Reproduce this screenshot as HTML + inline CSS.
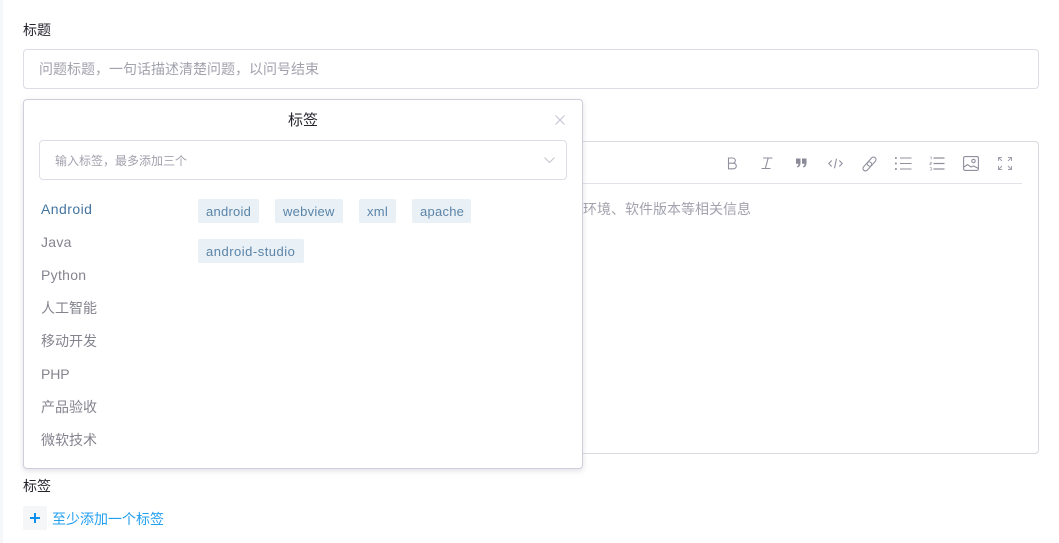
<!DOCTYPE html>
<html lang="zh">
<head>
<meta charset="utf-8">
<title>标题</title>
<style>
html,body{margin:0;padding:0;width:1059px;height:543px;overflow:hidden;background:#fff}
body{font-family:"Liberation Sans","Noto Sans CJK SC",sans-serif;position:relative}
.a{position:absolute;white-space:nowrap}
.strip{left:0;top:0;width:3px;height:543px;background:#f5f7f9}
.lab{left:23px;font-size:14px;line-height:20px;color:#25252d}
.box{box-sizing:border-box;border:1px solid #dddde6;border-radius:4px;background:#fff}
.ph{font-size:14px;line-height:20px;color:#a2a2ae}
.cat{left:41px;font-size:14px;line-height:20px;color:#84848f;letter-spacing:.3px}
.cjk{letter-spacing:0}
.tag{height:24px;line-height:26px;padding:0 8px;background:#e9f0f6;color:#5a84a8;font-size:13px;letter-spacing:.25px;border-radius:2px;box-sizing:border-box}
svg{position:absolute;overflow:visible;fill:none;stroke:#8f8f9e;stroke-width:1.1}
</style>
</head>
<body>
<div class="a strip"></div>
<div class="a lab" style="top:20px">标题</div>
<div class="a box" style="left:23px;top:49px;width:1016px;height:40px"></div>
<div class="a ph" style="left:39px;top:59px">问题标题，一句话描述清楚问题，以问号结束</div>

<div class="a box" style="left:23px;top:141px;width:1016px;height:313px;border-color:#d9d9df"></div>
<div class="a" style="left:583px;top:183px;width:439px;height:1px;background:#e2e2e8"></div>
<div class="a ph" style="left:583px;top:199px">环境、软件版本等相关信息</div>

<svg style="left:727px;top:157px" width="11" height="13" viewBox="0 0 11 13"><path d="M1.500 1h4.200a2.600 2.600 0 0 1 0 5.200H1.500zM1.500 6.200h5a2.800 2.800 0 0 1 0 5.600h-5z"/></svg>
<svg style="left:760px;top:157px" width="13" height="13" viewBox="0 0 13 13"><path d="M3 1h9.500M8.200 1L5.300 11.500M1.500 11.500h9"/></svg>
<svg style="left:796px;top:158px;stroke:none;fill:#8a8a98" width="11" height="10" viewBox="0 0 11 10"><path d="M0 .5h4.500v4.200C4.500 7 3.500 8.800 1.500 9.500L1 8.300C2 7.800 2.500 7 2.500 5.700H0zM6 .5h4.500v4.200C10.500 7 9.500 8.800 7.500 9.500L7 8.300C8 7.800 8.500 7 8.500 5.700H6z"/></svg>
<svg style="left:828px;top:158px" width="15" height="11" viewBox="0 0 15 11"><path d="M3.700 2.500L.8 5.500l2.900 3M11.300 2.500l2.900 3-2.900 3M8.500 .8L6.500 10.200"/></svg>
<svg style="left:861px;top:156px" width="17" height="16" viewBox="0 0 17 16"><g transform="rotate(-48 8.500 8)"><rect x="0" y="5.500" width="10.500" height="5" rx="2.500"/><rect x="6.500" y="5.500" width="10.500" height="5" rx="2.500"/></g></svg>
<svg style="left:895px;top:157px" width="17" height="13" viewBox="0 0 17 13"><path d="M5 1h11.500M5 6.500h11.500M5 12h11.500"/><path d="M0 1h1.800M0 6.500h1.800M0 12h1.800" stroke-width="1.800"/></svg>
<svg style="left:930px;top:157px" width="15" height="13" viewBox="0 0 15 13"><path d="M3.500 1h11M3.500 6.500h11M3.500 12h11" stroke-width="1.300"/><path d="M0 0h1.200v2.400M0 5.200h1.300v1.300H0v1.300h1.300M0 10.700h1.300v2.400H0" stroke-width=".6"/></svg>
<svg style="left:963px;top:156px" width="16" height="15" viewBox="0 0 16 15"><rect x=".6" y=".6" width="14.800" height="13.800" rx="1.500"/><circle cx="10.500" cy="5" r="1.700"/><path d="M1 11l3.500-2.500 3.500 2.500 2.500-1 5 2.500"/></svg>
<svg style="left:998px;top:157px;stroke:#a0a0ad;stroke-width:1" width="14" height="13" viewBox="0 0 14 13"><path d="M.5 4V.5h3.500M.5.500l3.500 3.500M10 .5h3.500V4M13.500.5L10 4M.5 9v3.500H4M.5 12.500L4 9M13.500 9v3.500H10M13.500 12.500L10 9"/></svg>

<div class="a box" style="left:23px;top:99px;width:560px;height:370px;border-color:#cfcfdc;box-shadow:0 2px 6px rgba(120,120,150,.22)"></div>
<div class="a" style="left:23px;top:110px;width:560px;text-align:center;font-size:15px;line-height:22px;color:#25252d">标签</div>
<svg style="left:555px;top:115px;stroke:#c4c4d0;stroke-width:1.100" width="10" height="10" viewBox="0 0 10 10"><path d="M.5.500l9 9M9.500.500l-9 9"/></svg>
<div class="a box" style="left:39px;top:140px;width:528px;height:40px"></div>
<div class="a" style="left:55px;top:152px;font-size:12px;line-height:18px;color:#a2a2ae">输入标签，最多添加三个</div>
<svg style="left:544px;top:157px;stroke:#c4c4d0;stroke-width:1" width="11" height="6" viewBox="0 0 11 6"><path d="M.5.500l5 5 5-5"/></svg>

<div class="a cat" style="top:199px;color:#44749f;letter-spacing:.45px">Android</div>
<div class="a cat" style="top:232px">Java</div>
<div class="a cat" style="top:265px">Python</div>
<div class="a cat cjk" style="top:298px">人工智能</div>
<div class="a cat cjk" style="top:331px">移动开发</div>
<div class="a cat cjk" style="top:364px;letter-spacing:-.1px">PHP</div>
<div class="a cat cjk" style="top:397px">产品验收</div>
<div class="a cat cjk" style="top:430px">微软技术</div>

<div class="a tag" style="left:198px;top:199px;width:61px">android</div>
<div class="a tag" style="left:275px;top:199px;width:68px">webview</div>
<div class="a tag" style="left:359px;top:199px;width:37px">xml</div>
<div class="a tag" style="left:412px;top:199px;width:59px">apache</div>
<div class="a tag" style="left:198px;top:239px;width:106px;letter-spacing:.5px">android-studio</div>

<div class="a lab" style="top:476px">标签</div>
<div class="a" style="left:23px;top:506px;width:24px;height:24px;background:#f4f6f8;border-radius:2px"></div>
<svg style="left:30px;top:513px;stroke:#0f8fee;stroke-width:2" width="10" height="10" viewBox="0 0 10 10"><path d="M5 0v10M0 5h10"/></svg>
<div class="a" style="left:52px;top:509px;font-size:14px;line-height:20px;color:#239ff0">至少添加一个标签</div>
</body>
</html>
